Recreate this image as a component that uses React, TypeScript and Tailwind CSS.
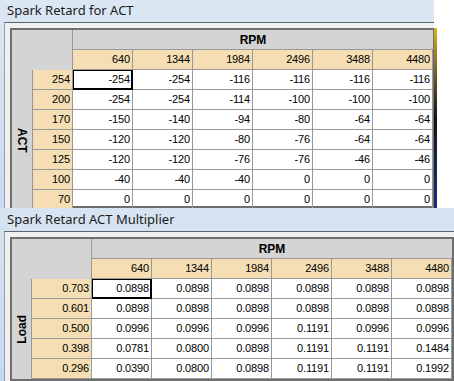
import React from 'react';

type TableProps = {
  label: string;
  flip?: boolean;
  wide?: boolean;
  cols: string[];
  rowLabels: string[];
  rows: string[][];
};

const cellFont = { fontFamily: '"Liberation Sans", Arial, sans-serif' };

const Table: React.FC<TableProps> = ({ label, flip, wide, cols, rowLabels, rows }) => {
  return (
    <div className="shrink-0 border-2 border-[#6e6e6e] bg-white text-[11px] tracking-[-0.15px] text-black" style={cellFont}>
      {/* header */}
      <div className="flex">
        <div className={`${wide ? 'w-[80px]' : 'w-[61px]'} h-[40px] bg-[#d4d4d4] border-r border-[#999999]`} />
        <div className="flex flex-col">
          <div className="h-[20px] bg-[#d4d4d4] border-b border-[#999999] flex items-center justify-center text-[12px] font-bold tracking-normal">
            RPM
          </div>
          <div className="flex">
            {cols.map((c) => (
              <div key={c} className="w-[60px] h-[20px] bg-[#f5deb3] border-r border-b border-[#999999] flex items-center justify-end pr-[2px]">
                {c}
              </div>
            ))}
          </div>
        </div>
      </div>
      {/* body */}
      <div className="flex">
        <div className={`${wide ? 'w-[20px]' : 'w-[21px]'} bg-[#d4d4d4] border-r border-[#999999] flex items-center justify-center`}>
          <span className={`[writing-mode:vertical-rl] text-[12px] font-bold tracking-normal ${flip ? 'rotate-180' : ''}`}>{label}</span>
        </div>
        <div className="flex flex-col">
          {rows.map((r, i) => (
            <div key={i} className="flex">
              <div className={`${wide ? 'w-[60px]' : 'w-[40px]'} h-[20px] bg-[#f5deb3] border-r border-b border-[#999999] flex items-center justify-end pr-[2px]`}>
                {rowLabels[i]}
              </div>
              {r.map((v, j) =>
                i === 0 && j === 0 ? (
                  <div key={j} className="w-[60px] h-[20px] border-r border-b border-black shadow-[inset_0_0_0_1px_#000] flex items-center justify-end pr-[2px]">
                    {v}
                  </div>
                ) : (
                  <div key={j} className="w-[60px] h-[20px] border-r border-b border-[#999999] flex items-center justify-end pr-[2px]">
                    {v}
                  </div>
                )
              )}
            </div>
          ))}
        </div>
      </div>
    </div>
  );
};

const titleFont = { fontFamily: '"Segoe UI", "Noto Sans", sans-serif' };

const rpm = ['640', '1344', '1984', '2496', '3488', '4480'];

const actRows = [
  ['-254', '-254', '-116', '-116', '-116', '-116'],
  ['-254', '-254', '-114', '-100', '-100', '-100'],
  ['-150', '-140', '-94', '-80', '-64', '-64'],
  ['-120', '-120', '-80', '-76', '-64', '-64'],
  ['-120', '-120', '-76', '-76', '-46', '-46'],
  ['-40', '-40', '-40', '0', '0', '0'],
  ['0', '0', '0', '0', '0', '0'],
];

const loadRows = [
  ['0.0898', '0.0898', '0.0898', '0.0898', '0.0898', '0.0898'],
  ['0.0898', '0.0898', '0.0898', '0.0898', '0.0898', '0.0898'],
  ['0.0996', '0.0996', '0.0996', '0.1191', '0.0996', '0.0996'],
  ['0.0781', '0.0800', '0.0898', '0.1191', '0.1191', '0.1484'],
  ['0.0390', '0.0800', '0.0898', '0.1191', '0.1191', '0.1992'],
];

export default function App() {
  return (
    <div className="w-[454px] h-[381px] overflow-hidden bg-white">
      {/* Spark Retard for ACT */}
      <div className="flex h-[208px] overflow-hidden">
        <div className="w-[434px] shrink-0 flex flex-col bg-gradient-to-b from-[#dbe7f3] to-[#c9dbed]">
          <div className="h-[22px] shrink-0 flex items-center pl-[7px] text-[13px] text-[#1b1b1b]" style={titleFont}>
            Spark Retard for ACT
          </div>
          <div className="flex-1 ml-[4px] border-l border-t border-l-[#8fa0b3] border-t-[#5b6673] bg-[#f0f0f0] pl-[5px] pt-[5px] overflow-hidden flex">
            <Table label="ACT" cols={rpm} rowLabels={['254', '200', '170', '150', '125', '100', '70']} rows={actRows} />
          </div>
        </div>
        <div className="w-[3px] mt-[28px] bg-gradient-to-b from-[#e3b20a] via-[#151515] to-[#1d2a86]" />
        <div className="flex-1 bg-white" />
      </div>

      {/* Spark Retard ACT Multiplier */}
      <div className="h-[173px] flex flex-col bg-gradient-to-b from-[#d7e4f1] to-[#c6d9ec] overflow-hidden">
        <div className="h-[23px] shrink-0 flex items-center pl-[7px] text-[13px] text-[#1b1b1b]" style={titleFont}>
          Spark Retard ACT Multiplier
        </div>
        <div className="flex-1 ml-[4px] border-l border-t border-l-[#8fa0b3] border-t-[#5b6673] bg-[#f0f0f0] pl-[5px] pt-[5px] overflow-hidden flex">
          <Table label="Load" flip wide cols={rpm} rowLabels={['0.703', '0.601', '0.500', '0.398', '0.296']} rows={loadRows} />
        </div>
      </div>
    </div>
  );
}
